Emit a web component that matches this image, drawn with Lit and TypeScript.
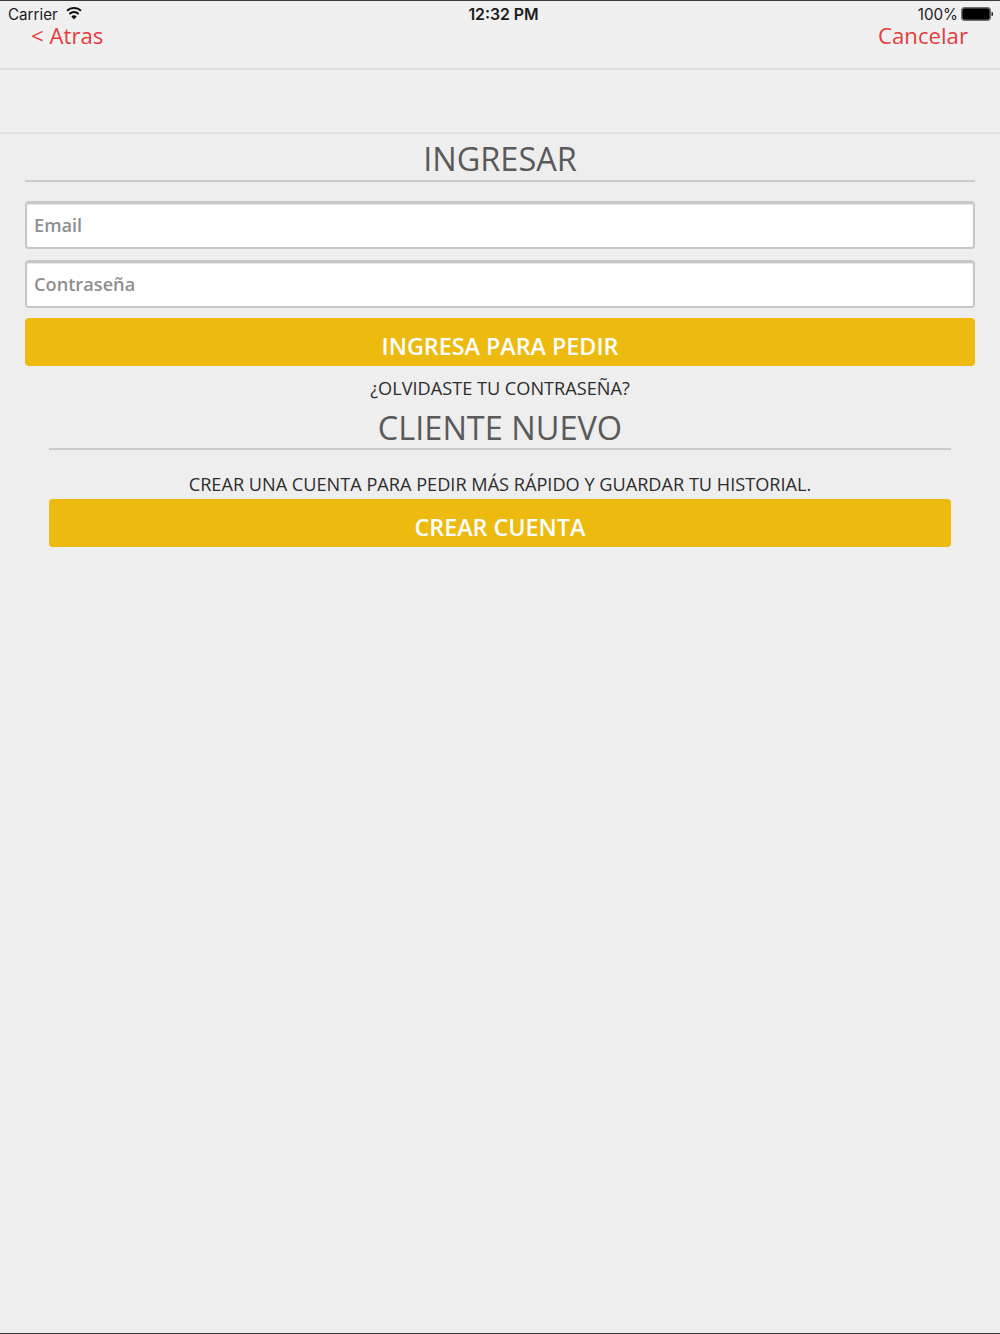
import { LitElement, html, css } from "lit";
import { customElement } from "lit/decorators.js";

@customElement("app-root")
export class AppRoot extends LitElement {
  static styles = css`
    :host {
      display: block;
      width: 1000px;
      height: 1334px;
      background: #eeeeee;
      font-family: "Open Sans", sans-serif;
      box-sizing: border-box;
      border-top: 1px solid #3a3a3a;
      border-bottom: 1px solid #3a3a3a;
      overflow: hidden;
    }
    * { box-sizing: border-box; }
    .nav {
      height: 69px;
      background: #f0f0f0;
      border-bottom: 2px solid #e0e0e0;
      display: flex;
      flex-direction: column;
    }
    .status {
      height: 25px;
      padding: 2px 7px 0 8px;
      display: grid;
      grid-template-columns: 1fr auto 1fr;
      align-items: center;
      font-family: Inter, sans-serif;
      font-size: 15.2px;
      line-height: 16px;
      color: #1c1c1c;
    }
    .left { display: flex; align-items: center; gap: 8px; }
    .right { display: flex; align-items: center; justify-content: flex-end; gap: 3px; }
    .time { font-weight: 600; font-size: 15.8px; padding-left: 6px; }
    .left svg, .right svg { margin-top: -2px; }
    .links {
      display: flex;
      justify-content: space-between;
      padding: 0 32px 0 31px;
      font-size: 22.2px;
      line-height: 22px;
      color: #e53c3c;
      margin-top: -1px;
    }
    .sub {
      height: 64px;
      background: #f0f0f0;
      border-bottom: 2px solid #e2e2e2;
    }
    .main { padding: 0 25px; display: flex; flex-direction: column; }
    h1 {
      margin: 0;
      font-weight: 400;
      font-size: 32.5px;
      line-height: 50px;
      height: 48px;
      text-align: center;
      color: #5a5a5a;
      border-bottom: 2px solid #cccccc;
    }
    .field {
      height: 48px;
      background: #fff;
      border: 2px solid #c8c8c8;
      border-top-width: 3px;
      border-radius: 4px;
      box-shadow: inset 0 1px 1px #e4e4e4;
      padding: 0 7px 2px;
      display: flex;
      align-items: center;
      font-size: 18.2px;
      font-weight: 600;
      color: #8f8f8f;
    }
    .email { margin-top: 19px; }
    .pass { margin-top: 11px; }
    .btn {
      height: 48px;
      background: #edba10;
      border-radius: 4px;
      color: #fff;
      font-size: 23.3px;
      font-weight: 600;
      display: flex;
      align-items: center;
      justify-content: center;
    }
    .login { margin-top: 10px; padding-top: 8px; }
    .forgot {
      text-align: center;
      font-size: 18.15px;
      line-height: 24px;
      color: #2d2d2d;
      margin-top: 10px;
    }
    .new { padding: 0 24px; display: flex; flex-direction: column; }
    .new h1 { height: 50px; line-height: 56px; }
    .desc {
      text-align: center;
      font-size: 18.15px;
      line-height: 24px;
      color: #2d2d2d;
      margin-top: 22px;
    }
    .create { margin-top: 3px; padding-top: 7px; }
  `;

  render() {
    return html`
      <div class="nav">
        <div class="status">
          <div class="left">
            <span>Carrier</span>
            <svg width="16" height="13" viewBox="0 0 16 13">
              <path d="M8 12.6 5.3 9.4a4 4 0 0 1 5.4 0Z" fill="#111" />
              <path d="M3.4 6.9a6.8 6.8 0 0 1 9.2 0" fill="none" stroke="#111" stroke-width="2" />
              <path d="M1 3.7a10.4 10.4 0 0 1 14 0" fill="none" stroke="#111" stroke-width="2" />
            </svg>
          </div>
          <div class="time">12:32 PM</div>
          <div class="right">
            <span>100%</span>
            <svg width="32" height="14" viewBox="0 0 32 14">
              <rect x="0.75" y="0.75" width="28.5" height="12.5" rx="3" fill="#000" stroke="#6e6e6e" stroke-width="1.5" />
              <path d="M30.5 5h.5a1 1 0 0 1 1 1v2a1 1 0 0 1-1 1h-.5Z" fill="#222" />
            </svg>
          </div>
        </div>
        <div class="links"><span>&lt; Atras</span><span>Cancelar</span></div>
      </div>
      <div class="sub"></div>
      <div class="main">
        <h1>INGRESAR</h1>
        <div class="field email">Email</div>
        <div class="field pass">Contraseña</div>
        <div class="btn login">INGRESA PARA PEDIR</div>
        <div class="forgot">¿OLVIDASTE TU CONTRASEÑA?</div>
        <div class="new">
          <h1>CLIENTE NUEVO</h1>
          <div class="desc">CREAR UNA CUENTA PARA PEDIR MÁS RÁPIDO Y GUARDAR TU HISTORIAL.</div>
          <div class="btn create">CREAR CUENTA</div>
        </div>
      </div>
    `;
  }
}
